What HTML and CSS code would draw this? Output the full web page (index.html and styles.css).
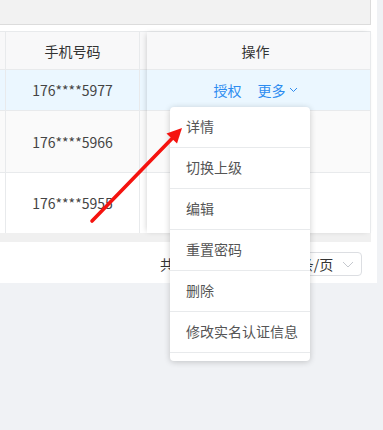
FILE: index.html
```html
<!DOCTYPE html>
<html lang="zh-CN">
<head>
<meta charset="utf-8">
<title>用户列表</title>
<link rel="stylesheet" href="styles.css">
</head>
<body>
<div class="panel">
  <div class="toolbar"></div>
  <div class="table">
    <div class="scroll-part">
      <div class="row head">
        <div class="cell sliver-l"></div>
        <div class="cell phone">手机号码</div>
        <div class="cell sliver-r"></div>
      </div>
      <div class="row r1">
        <div class="cell sliver-l"></div>
        <div class="cell phone">176****5977</div>
        <div class="cell sliver-r"></div>
      </div>
      <div class="row r2">
        <div class="cell sliver-l"></div>
        <div class="cell phone">176****5966</div>
        <div class="cell sliver-r"></div>
      </div>
      <div class="row r3">
        <div class="cell sliver-l"></div>
        <div class="cell phone">176****5955</div>
        <div class="cell sliver-r"></div>
      </div>
    </div>
    <div class="fixed-part">
      <div class="row head"><div class="cell op">操作</div></div>
      <div class="row r1">
        <div class="cell op">
          <span class="link">授权</span>
          <span class="link more">更多<svg class="chev" width="9" height="6" viewBox="0 0 9 6"><polyline points="1,1 4.5,4.5 8,1" fill="none" stroke="#2d8cf0" stroke-width="1"/></svg></span>
        </div>
      </div>
      <div class="row r2"><div class="cell op"></div></div>
      <div class="row r3"><div class="cell op"></div></div>
    </div>
  </div>
  <div class="hscroll"></div>
  <div class="pager">
    <span class="total">共 3 条</span>
    <span class="size-select">10 条/页<svg class="sel-chev" width="12" height="7" viewBox="0 0 12 7"><polyline points="1,1 6,6 11,1" fill="none" stroke="#c5c8ce" stroke-width="1"/></svg></span>
  </div>
</div>

<ul class="menu">
  <li>详情</li>
  <li>切换上级</li>
  <li>编辑</li>
  <li>重置密码</li>
  <li>删除</li>
  <li>修改实名认证信息</li>
</ul>

<svg class="annot" width="383" height="430" viewBox="0 0 383 430">
  <line x1="92" y1="221" x2="173" y2="137.5" stroke="#f5130f" stroke-width="3.6" stroke-linecap="round"/>
  <polygon points="182,128 177,143.5 166.5,133.5" fill="#f5130f"/>
</svg>
</body>
</html>
```

FILE: styles.css
```css
html, body {
  margin: 0;
  padding: 0;
}
body {
  background: #f0f2f5;
  font-family: "Noto Sans CJK SC", "Noto Sans", sans-serif;
  font-size: 14px;
  color: #444;
  width: 383px;
  height: 430px;
  overflow: hidden;
  position: relative;
}
.panel {
  width: 377px;
  height: 283px;
  background: #fff;
  display: flex;
  flex-direction: column;
}
.toolbar {
  width: 371px;
  height: 25px;
  box-sizing: border-box;
  background: #f2f2f2;
  border-right: 1px solid #dcdcdc;
  border-bottom: 1px solid #dcdcdc;
  margin-bottom: 6px;
}
.table {
  width: 371px;
  display: flex;
  border-top: 1px solid #e8eaec;
  box-sizing: border-box;
}
.scroll-part {
  width: 147px;
  display: flex;
  flex-direction: column;
}
.fixed-part {
  width: 224px;
  display: flex;
  flex-direction: column;
  box-shadow: -2px 0 6px -2px rgba(0, 0, 0, 0.2);
  position: relative;
  z-index: 1;
  border-right: 1px solid #e8eaec;
  box-sizing: border-box;
}
.row {
  display: flex;
  box-sizing: border-box;
  border-bottom: 1px solid #e8eaec;
}
.row.head { height: 38px; background: #f8f8f9; color: #333; }
.row.r1 { height: 41px; background: #ebf7ff; }
.row.r2 { height: 62px; background: #fafafa; }
.row.r3 { height: 60px; background: #fff; border-bottom: none; }
.cell {
  display: flex;
  align-items: center;
  justify-content: center;
  box-sizing: border-box;
}
.sliver-l { width: 6px; border-right: 1px solid #e8eaec; }
.phone { width: 134px; border-right: 1px solid #e8eaec; }
.sliver-r { width: 7px; }
.op { width: 100%; gap: 16px; padding-right: 6px; }
.link {
  color: #2d8cf0;
  display: inline-flex;
  align-items: center;
}
.more .chev { margin-left: 3px; }
.hscroll {
  width: 371px;
  height: 9px;
  background: #f0f0f0;
}
.pager {
  height: 41px;
  display: flex;
  align-items: center;
  padding: 3px 15px 0 160px;
  box-sizing: border-box;
  color: #333;
  white-space: nowrap;
}
.pager > span { flex-shrink: 0; }
.size-select {
  margin-left: auto;
  height: 24px;
  width: 90px;
  box-sizing: border-box;
  border: 1px solid #dcdee2;
  border-radius: 4px;
  display: flex;
  align-items: center;
  padding-left: 8px;
}
.sel-chev { margin-left: 9px; }
.menu {
  position: absolute;
  left: 170px;
  top: 107px;
  width: 140px;
  margin: 0;
  padding: 0 0 8px 0;
  list-style: none;
  background: #fff;
  border-radius: 4px;
  box-shadow: 0 1px 6px rgba(0, 0, 0, 0.2);
  z-index: 5;
}
.menu li {
  height: 41px;
  box-sizing: border-box;
  border-bottom: 1px solid #e8eaec;
  padding: 0 0 2px 16px;
  display: flex;
  align-items: center;
  color: #555;
  white-space: nowrap;
}
.annot {
  position: absolute;
  left: 0;
  top: 0;
  z-index: 10;
  pointer-events: none;
}
```
